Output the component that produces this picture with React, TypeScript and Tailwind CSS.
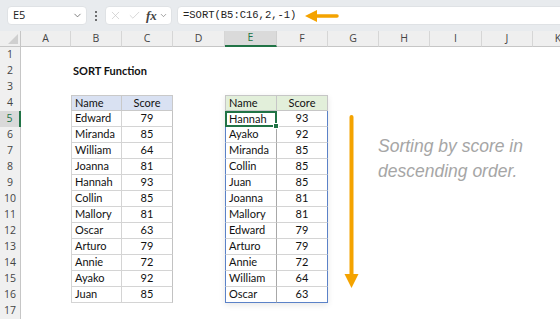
import React from "react";
import { ChevronDown, X, Check } from "lucide-react";

const COLS: { l: string; w: string }[] = [
  { l: "A", w: "w-[50px]" },
  { l: "B", w: "w-[51px]" },
  { l: "C", w: "w-[51px]" },
  { l: "D", w: "w-[52px]" },
  { l: "E", w: "w-[52px]" },
  { l: "F", w: "w-[51px]" },
  { l: "G", w: "w-[51px]" },
  { l: "H", w: "w-[51px]" },
  { l: "I", w: "w-[52px]" },
  { l: "J", w: "w-[51px]" },
  { l: "K", w: "w-[51px]" },
];

const data: [string, number][] = [
  ["Edward", 79],
  ["Miranda", 85],
  ["William", 64],
  ["Joanna", 81],
  ["Hannah", 93],
  ["Collin", 85],
  ["Mallory", 81],
  ["Oscar", 63],
  ["Arturo", 79],
  ["Annie", 72],
  ["Ayako", 92],
  ["Juan", 85],
];

const sorted: [string, number][] = [...data].sort((a, b) => b[1] - a[1]);

const ui = "font-['Open_Sans',sans-serif]";
const cell = "font-['Lato',sans-serif] text-[11px] text-[#111]";

function Table1() {
  return (
    <div className={`col-start-2 col-span-2 row-start-4 row-span-13 grid grid-cols-[51px_51px] grid-rows-[repeat(13,16px)] ${cell}`}>
      <div className="bg-[#d9e1f2] border-l border-t border-r border-b border-[#c9c9c9] pl-[3px] flex items-center">Name</div>
      <div className="bg-[#d9e1f2] border-t border-r border-b border-[#c9c9c9] flex items-center justify-center">Score</div>
      {data.map(([n, s]) => (
        <React.Fragment key={n}>
          <div className="border-l border-r border-b border-[#d4d4d4] pl-[3px] flex items-center">{n}</div>
          <div className="border-r border-r-[#c2c2c2] border-b border-b-[#d4d4d4] flex items-center justify-center">{s}</div>
        </React.Fragment>
      ))}
    </div>
  );
}

function Table2() {
  return (
    <div className={`col-start-5 col-span-2 row-start-4 row-span-13 grid grid-cols-[52px_51px] grid-rows-[repeat(13,16px)] shadow-[0_2px_6px_rgba(0,0,0,0.10)] ${cell}`}>
      <div className="bg-[#e2efda] border-l border-t border-r border-b border-[#c6c6c6] pl-[3px] flex items-center">Name</div>
      <div className="bg-[#e2efda] border-t border-r border-b border-[#c6c6c6] flex items-center justify-center">Score</div>
      {sorted.map(([n, s], i) => {
        const last = i === sorted.length - 1;
        const first = i === 0;
        return (
          <React.Fragment key={n}>
            {first ? (
              <div className="relative border-2 border-[#217346] pl-[2px] flex items-center">
                {n}
                <div className="absolute -right-[4px] -bottom-[4px] w-[6px] h-[6px] bg-[#217346] border border-white" />
              </div>
            ) : (
              <div
                className={
                  last
                    ? "border-l border-l-[#5b82c8] border-r border-r-[#a8a8a8] border-b border-b-[#5b82c8] pl-[3px] flex items-center"
                    : "border-l border-l-[#5b82c8] border-r border-r-[#a8a8a8] border-b border-b-[#d4d4d4] pl-[3px] flex items-center"
                }
              >
                {n}
              </div>
            )}
            <div
              className={
                last
                  ? "border-r border-r-[#5b82c8] border-b border-b-[#5b82c8] flex items-center justify-center"
                  : "border-r border-r-[#5b82c8] border-b border-b-[#d4d4d4] flex items-center justify-center"
              }
            >
              {s}
            </div>
          </React.Fragment>
        );
      })}
    </div>
  );
}

export default function App() {
  const rows = Array.from({ length: 17 }, (_, i) => i + 1);
  return (
    <div className="w-[560px] h-[320px] overflow-hidden bg-white relative">
      {/* Top bar */}
      <div className={`h-[31px] bg-[#e8ebee] flex items-center pl-[7px] ${ui}`}>
        <div className="w-[80px] shrink-0 h-[19px] bg-white rounded-[4px] border border-[#dfe2e5] flex items-center justify-between pl-[5px] pr-[3px]">
          <span className="text-[11px] text-[#222]">E5</span>
          <ChevronDown size={11} strokeWidth={1.6} color="#555" />
        </div>
        <div className="w-[18px] shrink-0 flex flex-col items-center gap-[2px]">
          <div className="w-[2px] h-[2px] bg-[#444] rounded-full" />
          <div className="w-[2px] h-[2px] bg-[#444] rounded-full" />
          <div className="w-[2px] h-[2px] bg-[#444] rounded-full" />
        </div>
        <div className="w-[67px] shrink-0 h-[19px] bg-white rounded-[4px] border border-[#dfe2e5] flex items-center pl-[3px]">
          <X size={13} strokeWidth={1.2} color="#c2c2c2" />
          <Check size={13} strokeWidth={1.2} color="#c2c2c2" className="ml-[6px]" />
          <span className="ml-[5px] font-['Liberation_Serif',serif] italic font-bold text-[13px] text-[#444] leading-none">fx</span>
          <ChevronDown size={9} strokeWidth={1.6} color="#666" className="ml-[2px]" />
        </div>
        <div className="ml-[5px] w-[400px] shrink-0 h-[19px] bg-white rounded-[4px] border border-[#dfe2e5] flex items-center pl-[5px]">
          <span className="font-['Liberation_Mono',monospace] text-[10.5px] text-[#222]">=SORT(B5:C16,2,-1)</span>
          <svg width="34" height="14" viewBox="0 0 34 14" className="ml-[9px]">
            <line x1="10" y1="7" x2="32" y2="7" stroke="#f4a300" strokeWidth="3.5" strokeLinecap="round" />
            <polygon points="0,7 12,1 12,13" fill="#f4a300" />
          </svg>
        </div>
      </div>

      {/* Sheet */}
      <div className="flex">
        {/* Row headers */}
        <div className={`w-[21px] shrink-0 flex flex-col ${ui}`}>
          <div className="h-[16px] bg-[#efefef] border-r border-b border-[#c6c6c6] relative">
            <svg width="20" height="15" className="absolute inset-0">
              <polygon points="18,3 18,13 8,13" fill="#cfcfcf" />
            </svg>
          </div>
          {rows.map((r) =>
            r === 5 ? (
              <div key={r} className="h-[16px] bg-[#d9d9d9] border-r-2 border-[#217346] flex items-center justify-center text-[10.5px] text-[#217346]">
                {r}
              </div>
            ) : (
              <div key={r} className="h-[16px] bg-[#f0f0f0] border-r border-[#c6c6c6] flex items-center justify-center text-[10.5px] text-[#444]">
                {r}
              </div>
            )
          )}
        </div>

        {/* Body */}
        <div className="flex flex-col shrink-0">
          <div className={`flex h-[16px] ${ui}`}>
            {COLS.map((c) =>
              c.l === "E" ? (
                <div key={c.l} className={`${c.w} shrink-0 bg-[#dadada] border-r border-r-[#d0d0d0] border-b-2 border-b-[#217346] flex items-center justify-center text-[10.5px] text-[#217346]`}>
                  {c.l}
                </div>
              ) : (
                <div key={c.l} className={`${c.w} shrink-0 bg-[#efefef] border-r border-r-[#d6d6d6] border-b border-b-[#c6c6c6] flex items-center justify-center text-[10.5px] text-[#444]`}>
                  {c.l}
                </div>
              )
            )}
          </div>

          <div className="grid grid-cols-[50px_51px_51px_52px_52px_51px_51px_51px_52px_51px_51px] grid-rows-[repeat(17,16px)]">
            <div className={`col-start-2 col-span-2 row-start-2 pl-[2px] flex items-center font-bold ${cell}`}>SORT Function</div>
            <Table1 />
            <Table2 />
            <div className="col-start-7 row-start-5 row-span-12">
              <svg width="51" height="192" viewBox="0 0 51 192">
                <line x1="23.5" y1="6" x2="23.5" y2="166" stroke="#f4a300" strokeWidth="4" strokeLinecap="round" />
                <polygon points="16.5,163 30.5,163 23.5,177" fill="#f4a300" />
              </svg>
            </div>
            <div className="col-start-8 col-span-4 row-start-6 row-span-3 pt-[7px] -ml-[1px]">
              <div className="font-['Liberation_Sans',sans-serif] italic text-[17.5px] leading-[25px] text-[#a6a6a6] whitespace-nowrap">
                Sorting by score in
                <br />
                descending order.
              </div>
            </div>
          </div>
        </div>
      </div>
    </div>
  );
}
